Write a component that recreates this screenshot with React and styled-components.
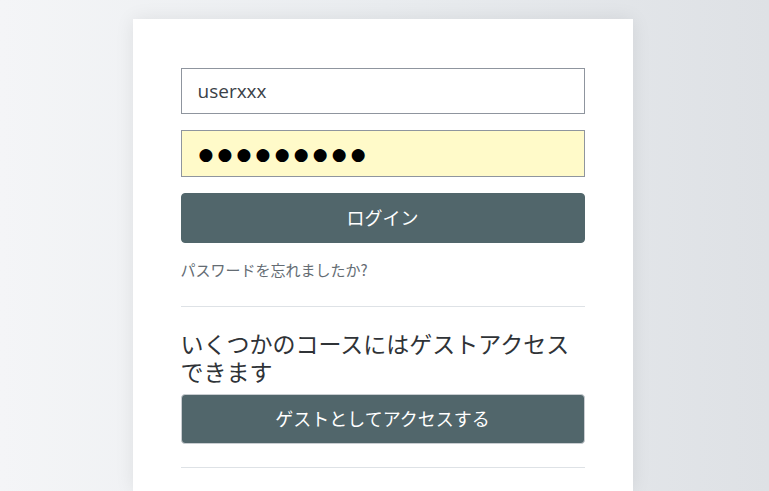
import React from "react";
import styled, { createGlobalStyle } from "styled-components";

const GlobalStyle = createGlobalStyle`
  html, body {
    margin: 0;
    padding: 0;
    height: 100%;
  }
  body {
    font-family: "Open Sans", "Noto Sans CJK JP", sans-serif;
    background: linear-gradient(90deg, #f4f5f7 0%, #e9ecef 50%, #dee1e5 100%);
    overflow: hidden;
  }
`;

const Page = styled.div`
  width: 769px;
  height: 491px;
  display: flex;
  justify-content: center;
  padding-top: 19px;
  box-sizing: border-box;
`;

const Card = styled.div`
  width: 500px;
  background: #ffffff;
  box-shadow: 0 0 18px rgba(0, 0, 0, 0.08);
  padding: 49px 48px 0;
  box-sizing: border-box;
  display: flex;
  flex-direction: column;
  margin-right: 4px;
`;

const Field = styled.input`
  display: block;
  width: 100%;
  height: ${(p) => (p.$masked ? "47px" : "46px")};
  box-sizing: border-box;
  border: 1px solid #8f959e;
  border-radius: 0;
  background: ${(p) => (p.$masked ? "#fffac9" : "#ffffff")};
  padding: ${(p) => (p.$masked ? "0 0 0 17px" : "0 16px")};
  font-family: ${(p) =>
    p.$masked ? '"DejaVu Sans", sans-serif' : '"Open Sans", "Noto Sans CJK JP", sans-serif'};
  font-size: ${(p) => (p.$masked ? "17px" : "19px")};
  letter-spacing: ${(p) => (p.$masked ? "4.2px" : "0")};
  color: ${(p) => (p.$masked ? "#000000" : "#3a4148")};
  margin-bottom: 16px;
  outline: none;
`;

const Button = styled.button`
  display: block;
  width: 100%;
  height: 50px;
  padding: 0 0 3px;
  border: 1px solid ${(p) => (p.$outlined ? "#c9cdd1" : "#51666b")};
  border-radius: 4px;
  background: #51666b;
  color: #ffffff;
  font-family: "Noto Sans CJK JP", sans-serif;
  font-size: 18px;
  cursor: pointer;
`;

const ForgotLink = styled.a`
  display: block;
  margin-top: 17px;
  font-family: "Noto Sans CJK JP", sans-serif;
  font-size: 15px;
  line-height: 20px;
  color: #646c73;
  text-decoration: none;
`;

const Divider = styled.hr`
  border: 0;
  border-top: 1px solid #dee2e6;
  margin: ${(p) => p.$margin};
  width: 100%;
`;

const Heading = styled.h2`
  margin: 0 0 9px;
  font-family: "Noto Sans CJK JP", sans-serif;
  font-weight: 400;
  font-size: 23px;
  line-height: 28px;
  color: #2f3337;
`;

export default function App() {
  return (
    <>
      <GlobalStyle />
      <Page>
        <Card>
          <Field type="text" defaultValue="userxxx" />
          <Field type="text" readOnly defaultValue="●●●●●●●●●" $masked />
          <Button>ログイン</Button>
          <ForgotLink href="#">パスワードを忘れましたか?</ForgotLink>
          <Divider $margin="26px 0 22px" />
          <Heading>
            いくつかのコースにはゲストアクセス
            <br />
            できます
          </Heading>
          <Button $outlined>ゲストとしてアクセスする</Button>
          <Divider $margin="23px 0 0" />
        </Card>
      </Page>
    </>
  );
}
